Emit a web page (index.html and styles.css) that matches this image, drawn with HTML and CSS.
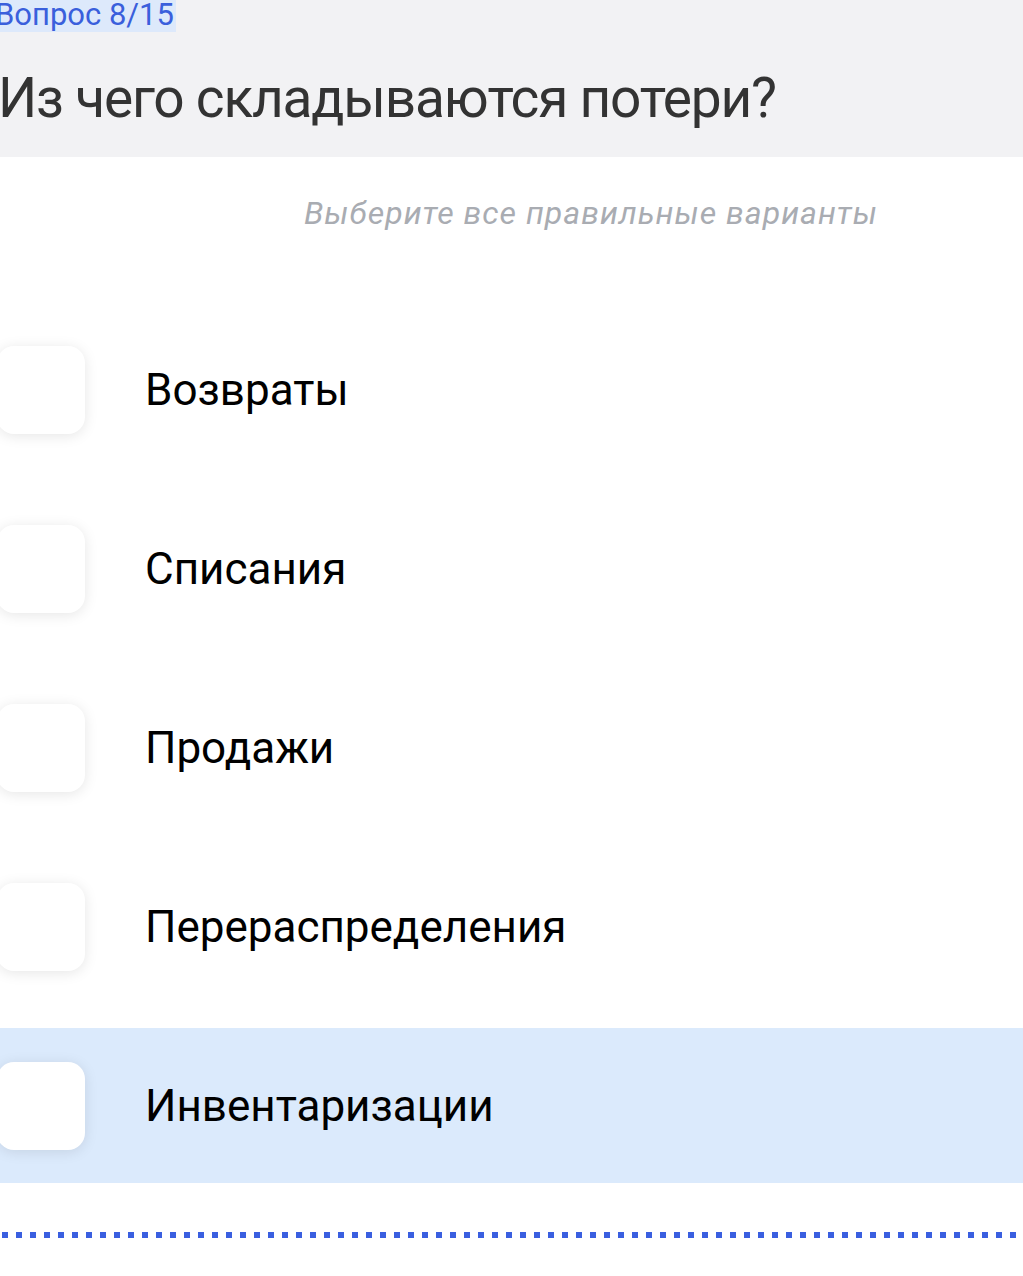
FILE: index.html
```
<!DOCTYPE html>
<html lang="ru">
<head>
    <meta charset="UTF-8">
    <meta name="viewport" content="width=device-width, initial-scale=1.0">
    <title>Вопрос 8/15</title>
    <link rel="stylesheet" href="styles.css">
</head>
<body>
    <div class="quiz">
        <div class="question-head">
            <span class="counter">Вопрос 8/15</span>
            <h1 class="question-title">Из чего складываются потери?</h1>
        </div>

        <p class="hint">Выберите все правильные варианты</p>

        <div class="options">
            <label class="option">
                <span class="check"></span>
                <span class="option-text">Возвраты</span>
            </label>
            <label class="option">
                <span class="check"></span>
                <span class="option-text">Списания</span>
            </label>
            <label class="option">
                <span class="check"></span>
                <span class="option-text">Продажи</span>
            </label>
            <label class="option">
                <span class="check"></span>
                <span class="option-text">Перераспределения</span>
            </label>
            <label class="option option-active">
                <span class="check"></span>
                <span class="option-text">Инвентаризации</span>
            </label>
        </div>

        <div class="divider"></div>
    </div>
</body>
</html>
```

FILE: styles.css
```
body {
    margin: 0;
    background-color: #fff;
    font-family: Roboto, "Noto Sans", Arial, sans-serif;
    overflow: hidden;
}
.quiz {
    margin-left: -3px;
}
.question-head {
    background-color: #f2f2f4;
    height: 157px;
}
.counter {
    display: inline-block;
    height: 32px;
    line-height: 30px;
    margin-left: -2px;
    padding-right: 2px;
    font-size: 31px;
    color: #3a5fdc;
    background-color: #dde9fb;
}
.question-title {
    margin: 0;
    padding: 32px 0 0 1px;
    font-size: 55px;
    font-weight: 400;
    line-height: 68px;
    letter-spacing: -1.2px;
    color: #333;
}
.hint {
    margin: 0;
    padding: 37px 0 0 307px;
    height: 80px;
    font-size: 32px;
    font-style: italic;
    line-height: 38px;
    letter-spacing: 1px;
    color: #a9acb2;
}
.options {
    display: flex;
    flex-direction: column;
    gap: 24px;
    margin-top: 38px;
}
.option {
    display: flex;
    align-items: center;
    height: 155px;
    cursor: pointer;
}
.option-active {
    background-color: #dbeafc;
}
.check {
    flex: none;
    width: 88px;
    height: 88px;
    border-radius: 17px;
    background-color: #fff;
    box-shadow: 0 2px 14px rgba(0,0,0,0.1);
}
.option-text {
    margin-left: 60px;
    font-size: 44px;
    color: #000;
}
.divider {
    margin: 49px 0 0 5px;
    height: 6px;
    background-image: linear-gradient(to right, #3a5fe0 6px, transparent 6px);
    background-size: 14px 6px;
}
```
